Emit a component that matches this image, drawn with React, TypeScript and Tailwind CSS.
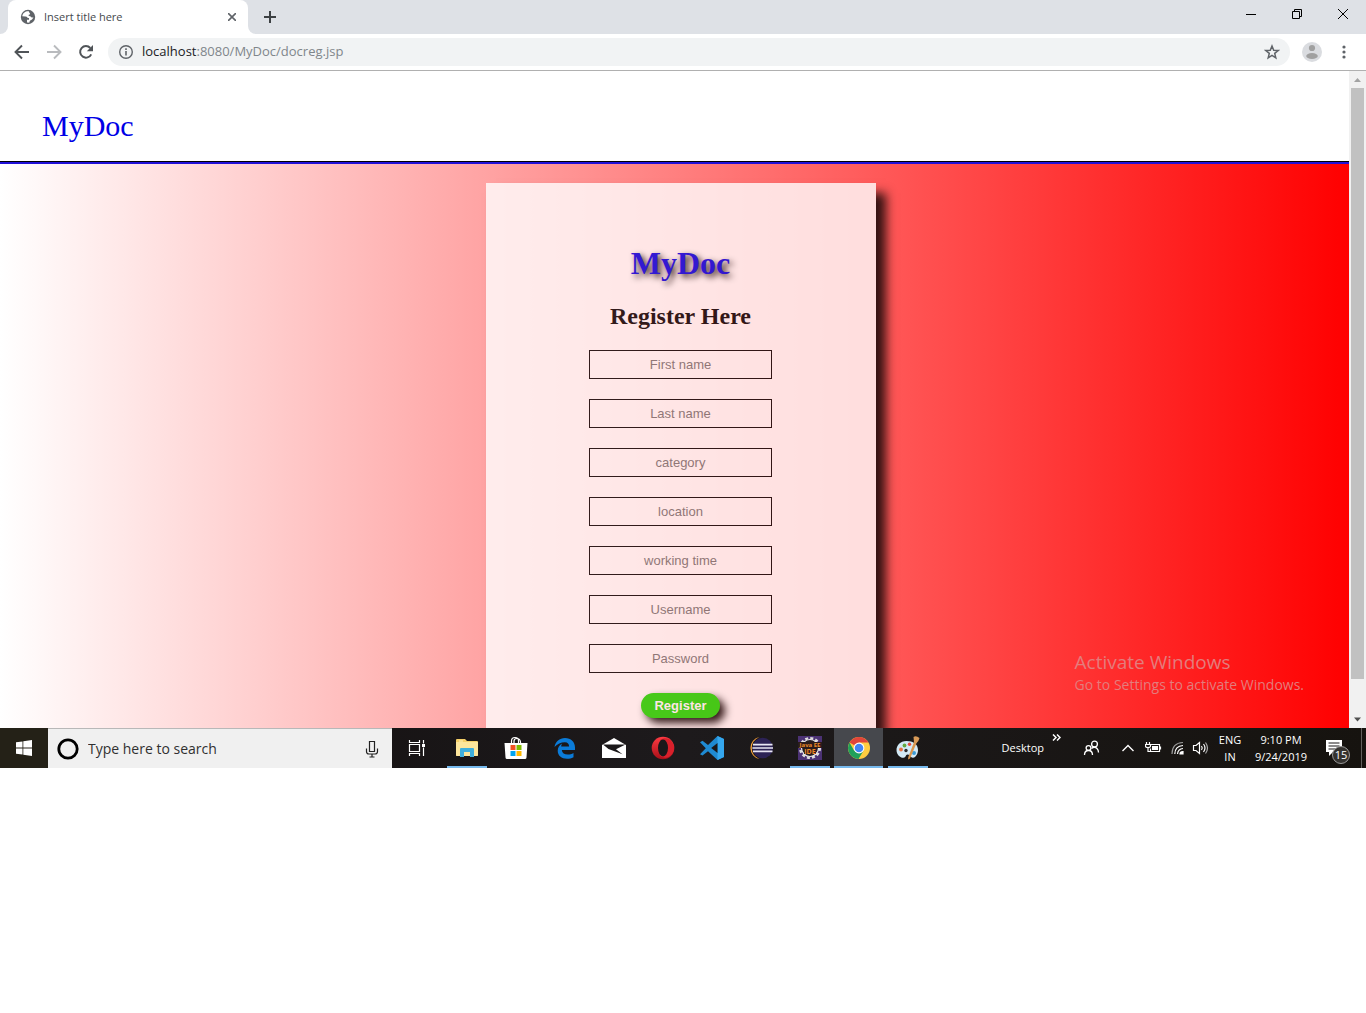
import type { ReactNode } from "react";

const fields = [
  { label: "First name", type: "text" },
  { label: "Last name", type: "text" },
  { label: "category", type: "text" },
  { label: "location", type: "text" },
  { label: "working time", type: "text" },
  { label: "Username", type: "text" },
  { label: "Password", type: "password" },
];

function TitleBar() {
  return (
    <div className="flex h-[34px] items-stretch bg-[#dee1e6]">
      <div className="flex w-2 items-end bg-white">
        <div className="h-full w-full rounded-br-lg bg-[#dee1e6]" />
      </div>
      <div className="flex w-60 items-center rounded-t-lg bg-white pr-2 pl-3">
        <svg width="16" height="16" viewBox="0 0 16 16" aria-hidden="true">
          <circle cx="8" cy="8" r="7.2" fill="#5f6368" />
          <path d="M8.8 2.300C5.500 2 2.600 4.100 2.300 7.300l3.200.1c1.500 0 2.100.8 2 1.700h1.500v1.600H7v2.900c.8.200 1.700.2 2.500 0 0-1.300.400-2 1.500-2.500 1-.5 1.900-1.200 2.400-2.800-1 .4-1.800.3-2.300-.4-.6-.8-1.700-.5-2.300-1.100-.5-.5-.2-1.200.5-1.300.9-.1 1-.8.5-1.300-.6-.5-.9-1.200-1-1.900z" fill="#fff" />
        </svg>
        <span className="ml-2 flex-1 text-[11px] text-[#45494d]">Insert title here</span>
        <button aria-label="Close tab" className="flex h-4 w-4 items-center justify-center">
          <svg width="8" height="8" viewBox="0 0 8 8" stroke="#5f6368" strokeWidth="1.600">
            <path d="M0 0l8 8M8 0L0 8" />
          </svg>
        </button>
      </div>
      <div className="flex w-2 bg-white">
        <div className="h-full w-full rounded-bl-lg bg-[#dee1e6]" />
      </div>
      <button aria-label="New tab" className="flex w-7 items-center justify-center">
        <svg width="12" height="12" viewBox="0 0 12 12" stroke="#3c4043" strokeWidth="2">
          <path d="M6 0v12M0 6h12" />
        </svg>
      </button>
      <div className="ml-auto flex h-7">
        <button aria-label="Minimize" className="flex w-[46px] items-center justify-center">
          <svg width="10" height="10" viewBox="0 0 10 10"><path d="M0 5.500h10" stroke="#000" /></svg>
        </button>
        <button aria-label="Restore" className="flex w-[46px] items-center justify-center">
          <svg width="10" height="10" viewBox="0 0 10 10" fill="none" stroke="#000">
            <path d="M.5 2.500h7v7h-7zM2.500 2.500v-2h7v7h-2" />
          </svg>
        </button>
        <button aria-label="Close" className="flex w-[46px] items-center justify-center">
          <svg width="10" height="10" viewBox="0 0 10 10" stroke="#000"><path d="M0 0l10 10M10 0L0 10" /></svg>
        </button>
      </div>
    </div>
  );
}

function Toolbar() {
  return (
    <div className="flex h-[37px] items-center border-b border-[#b0b0b0] bg-white pr-2.5 pl-3">
      <button aria-label="Back" className="w-8">
        <svg width="20" height="20" viewBox="0 0 20 20" fill="none" stroke="#505458" strokeWidth="1.900">
          <path d="M17 10H4M10 3.500L3.500 10l6.500 6.500" />
        </svg>
      </button>
      <button aria-label="Forward" className="w-8">
        <svg width="20" height="20" viewBox="0 0 20 20" fill="none" stroke="#b9bbbe" strokeWidth="1.900">
          <path d="M3 10h13M10 3.500l6.500 6.500-6.500 6.500" />
        </svg>
      </button>
      <button aria-label="Reload" className="w-8">
        <svg width="20" height="20" viewBox="0 0 20 20">
          <path d="M15.200 12.300A5.800 5.800 0 1 1 14.300 6" fill="none" stroke="#505458" strokeWidth="2" />
          <path d="M17 3v6.200h-6.200z" fill="#505458" />
        </svg>
      </button>
      <div className="flex h-7 flex-1 items-center rounded-full bg-[#f1f3f4] px-2.5">
        <svg width="16" height="16" viewBox="0 0 16 16" aria-hidden="true">
          <circle cx="8" cy="8" r="6.300" fill="none" stroke="#5f6368" strokeWidth="1.400" />
          <path d="M8 7v4.500M8 4.300v1.600" stroke="#5f6368" strokeWidth="1.600" />
        </svg>
        <a href="#docreg" className="ml-2 flex-1 text-[13px] text-[#80868b]">
          <span className="text-[#202124]">localhost</span>:8080/MyDoc/docreg.jsp
        </a>
        <button aria-label="Bookmark this page">
          <svg width="16" height="16" viewBox="0 0 16 16" fill="none" stroke="#5f6368" strokeWidth="1.500">
            <path d="M8 2l1.700 4.200 4.500.3-3.500 2.900 1.100 4.400L8 11.400l-3.800 2.400 1.100-4.400-3.500-2.900 4.500-.3z" />
          </svg>
        </button>
      </div>
      <button aria-label="Profile" className="ml-3">
        <svg width="20" height="20" viewBox="0 0 20 20">
          <circle cx="10" cy="10" r="10" fill="#dadce0" />
          <circle cx="10" cy="6" r="3.100" fill="#a0a0a0" />
          <ellipse cx="10" cy="14" rx="5.800" ry="3" fill="#a0a0a0" />
        </svg>
      </button>
      <button aria-label="Menu" className="ml-2.5">
        <svg width="24" height="16" viewBox="0 0 24 16" fill="#5f6368">
          <circle cx="12" cy="3" r="1.600" /><circle cx="12" cy="8" r="1.600" /><circle cx="12" cy="13" r="1.600" />
        </svg>
      </button>
    </div>
  );
}

function RegisterPage() {
  return (
    <div className="min-w-0 flex-1">
      <header className="border-b-2 border-[#2010d8] bg-white">
        <div className="border-b border-black px-[42px] pt-9 pb-[17px] font-['Liberation_Serif',serif] text-3xl leading-[37px]">
          <a href="#home" className="text-[#0000e6]">MyDoc</a>
        </div>
      </header>
      <main className="overflow-hidden bg-linear-to-r/srgb from-white to-[#ff0000] pt-[19px]">
        <form className="relative left-[6px] mx-auto flex w-[390px] flex-col items-center bg-white pt-[62px] pb-2.5 font-['Liberation_Serif',serif] opacity-80 shadow-[10px_10px_10px_#000]">
          <h1 className="text-[32px] leading-9 font-bold text-[#0000e6] [text-shadow:3px_3px_6px_#000]">MyDoc</h1>
          <h2 className="mt-5 mb-[19px] text-2xl leading-[30px] font-bold text-black">Register Here</h2>
          <div className="flex flex-col gap-5">
            {fields.map((f) => (
              <input
                key={f.label}
                type={f.type}
                aria-label={f.label}
                placeholder={f.label}
                className="h-[29px] w-[183px] border border-black bg-transparent text-center font-['Liberation_Sans',sans-serif] text-[13px] text-black placeholder:text-[#757575]"
              />
            ))}
          </div>
          <button
            type="submit"
            className="mt-5 h-[25px] w-[79px] rounded-full bg-[#1adb00] font-['Liberation_Sans',sans-serif] text-[13px] font-bold text-white shadow-[5px_5px_8px_#000]"
          >
            Register
          </button>
        </form>
      </main>
    </div>
  );
}

function ScrollBar() {
  return (
    <div className="flex w-[17px] flex-col items-center bg-[#f1f1f1]" aria-hidden="true">
      <svg width="17" height="17" viewBox="0 0 17 17"><path d="M5 11l3.500-4 3.500 4z" fill="#a3a3a3" /></svg>
      <div className="w-[13px] flex-1 bg-[#c1c1c1]" />
      <div className="h-8" />
      <svg width="17" height="17" viewBox="0 0 17 17"><path d="M5 6.500l3.500 4 3.500-4z" fill="#505050" /></svg>
    </div>
  );
}

function TaskButton({ label, running, active, children }: { label: string; running?: boolean; active?: boolean; children: ReactNode }) {
  return (
    <button
      aria-label={label}
      className={
        "flex h-10 w-[49px] shrink-0 flex-col items-center " + (active ? "bg-[#46484d]" : "")
      }
    >
      <span className="flex h-[38px] items-center pt-0.5">{children}</span>
      {running && <span className={active ? "h-0.5 w-full bg-[#76b9ed]" : "h-0.5 w-10 bg-[#76b9ed]"} />}
    </button>
  );
}

function TaskBar() {
  return (
    <footer className="flex h-10 items-stretch bg-linear-to-r from-[#110d0d] via-[#1d1a1c] to-[#16130f] text-white">
      <button aria-label="Start" className="flex w-12 items-center justify-center bg-[#242117]">
        <svg width="16" height="16" viewBox="0 0 16 16" fill="#fff">
          <path d="M0 2.300L6.500 1.400V7.600H0zM7.300 1.300L16 0v7.600H7.300zM0 8.400h6.500v6.200L0 13.700zM7.300 8.400H16V16l-8.700-1.300z" />
        </svg>
      </button>
      <label className="flex w-[344px] items-center border-t border-[#b8b8b8] bg-[#f0f0f0] pr-3 pl-2">
        <svg width="24" height="24" viewBox="0 0 24 24" aria-hidden="true">
          <circle cx="12" cy="12" r="9.200" fill="none" stroke="#000" strokeWidth="2.800" />
        </svg>
        <input
          aria-label="Search"
          placeholder="Type here to search"
          className="ml-2 min-w-0 flex-1 bg-transparent text-sm text-black placeholder:text-[#303030]"
        />
        <svg width="16" height="18" viewBox="0 0 16 18" fill="none" stroke="#222" strokeWidth="1.200">
          <path d="M5.500 1.500h5v10h-5zM2.500 8.500v3q0 2.500 2.500 2.500h6q2.500 0 2.500-2.500v-3M8 14v3M5.500 17h5" />
        </svg>
      </label>
      <div className="flex w-[50px] justify-center">
        <TaskButton label="Task view">
          <svg width="18" height="18" viewBox="0 0 18 18" fill="none" stroke="#fff" strokeWidth="1.200">
            <path d="M1.500 1v2.500h10V1M1.500 17v-2.500h10V17M1.500 5.500h10v7h-10zM15.500 1v3.500M15.500 8.500V17" />
            <path d="M14 5h3v3h-3z" fill="#fff" stroke="none" />
          </svg>
        </TaskButton>
      </div>
      <TaskButton label="File Explorer" running>
        <svg width="22" height="20" viewBox="0 0 22 20">
          <path d="M0 2q0-1 1-1h8l2 2h10q1 0 1 1v13q0 1-1 1H1q-1 0-1-1z" fill="#f5cf68" />
          <path d="M0 4h22v13q0 1-1 1H1q-1 0-1-1z" fill="#fde69c" />
          <path d="M4 11q0-1 1-1h12q1 0 1 1v8h-4v-5H8v5H4z" fill="#40afdc" />
          <path d="M3 3h4" stroke="#fff1b8" />
        </svg>
      </TaskButton>
      <TaskButton label="Microsoft Store">
        <svg width="24" height="24" viewBox="0 0 24 24">
          <path d="M7.500 7V5q0-3.500 3.500-3.500t3.500 3.500v2M10 7V5q0-2.500 3-2.500t3.500 3.500v1" fill="none" stroke="#fff" strokeWidth="1.200" />
          <path d="M.5 7h23l-1 14.500q-.1 1.500-1.500 1.500H3q-1.400 0-1.500-1.500z" fill="#fff" />
          <path d="M6.500 9h5v5h-5z" fill="#f25022" /><path d="M12.500 9h5v5h-5z" fill="#7fba00" />
          <path d="M6.500 15h5v5h-5z" fill="#00a4ef" /><path d="M12.500 15h5v5h-5z" fill="#ffb900" />
        </svg>
      </TaskButton>
      <TaskButton label="Edge">
        <svg width="22" height="22" viewBox="0 0 22 22">
          <path d="M.5 10C1.500 4.500 5.500 1 11 1c6 0 10 4 10 9.500V13H7.800c.3 3 2.600 4.500 6 4.500 2 0 4-.5 5.700-1.500v4.300c-2 1-4 1.500-6.500 1.500-5.500 0-9.300-3.200-9.300-8 0-3.200 1.700-5.800 4.500-7.300-.7 1-.9 1.800-1 3h7.900c0-2.700-1.400-4.300-4.200-4.300-4 0-7.500 2-10.400 4.800z" fill="#0b7bd8" />
        </svg>
      </TaskButton>
      <TaskButton label="Mail">
        <svg width="24" height="20" viewBox="0 0 24 20">
          <path d="M0 7L12 0l12 7v13H0z" fill="#fff" />
          <path d="M1 6.500h22.500l-9.500 4.800 6.500 5L6.500 11z" fill="#1b181a" />
        </svg>
      </TaskButton>
      <TaskButton label="Opera">
        <svg width="24" height="24" viewBox="0 0 24 24">
          <defs><linearGradient id="opera" x2="0" y2="1"><stop stopColor="#ff3b43" /><stop offset="1" stopColor="#a80f18" /></linearGradient></defs>
          <circle cx="12" cy="12" r="11.300" fill="url(#opera)" />
          <path d="M9 4c8-5 14 2 14 8s-6 13-14 8z" fill="#d9202b" />
          <ellipse cx="12" cy="12" rx="5" ry="8.500" fill="#1b181a" />
        </svg>
      </TaskButton>
      <TaskButton label="Visual Studio Code">
        <svg width="24" height="24" viewBox="0 0 24 24">
          <path d="M17.500 0L24 3v18l-6.500 3L8 15.200 2.500 19.500 0 18.200l5.800-6L0 6.200l2.500-1.500L8 9z" fill="#1f8ad2" />
          <path d="M17.500 0L24 3v18l-6.500 3z" fill="#35a7ee" />
          <path d="M17.500 7v10l-6.300-5z" fill="#1b181a" />
        </svg>
      </TaskButton>
      <TaskButton label="Eclipse">
        <svg width="24" height="24" viewBox="0 0 24 24">
          <path d="M10.500 1A11.200 11.200 0 0 0 10.500 23Q2.800 19.500 2.800 12T10.500 1z" fill="#f7a13a" />
          <circle cx="13.700" cy="12" r="10.300" fill="#2c2255" />
          <path d="M4 8.700h19.500M3.400 12h20.600M4 15.300h19.500" stroke="#e8e6f4" strokeWidth="1.700" />
        </svg>
      </TaskButton>
      <TaskButton label="Java EE IDE" running>
        <svg width="24" height="24" viewBox="0 0 24 24">
          <path d="M0 0h24v24H0z" fill="#4b3274" />
          <circle cx="12" cy="12" r="9.800" fill="none" stroke="#ddd" strokeWidth="2.500" strokeDasharray="3 2.130" />
          <circle cx="12" cy="12" r="8.500" fill="#241c22" stroke="#eee" strokeWidth="1.200" />
          <path d="M0 6h24v6H0zM6 12h12v6H6z" fill="#2b1b1b" />
          <text x="12" y="11" textAnchor="middle" fontSize="6" fontWeight="700" fill="#ef8a28">Java EE</text>
          <text x="12" y="18" textAnchor="middle" fontSize="7" fontWeight="700" fill="#ef8a28">IDE</text>
        </svg>
      </TaskButton>
      <TaskButton label="Chrome" running active>
        <svg width="24" height="24" viewBox="0 0 24 24">
          <circle cx="12" cy="12" r="11" fill="#ffcd40" />
          <path d="M12 12L2.500 6.500A11 11 0 0 1 21.500 6.500H12z" fill="#e0453a" />
          <path d="M2.500 6.500A11 11 0 0 0 11.500 23l5-8.200L12 12 7.200 14.700z" fill="#20a05a" />
          <circle cx="12" cy="12" r="5.400" fill="#fff" />
          <circle cx="12" cy="12" r="4.300" fill="#4285f4" />
        </svg>
      </TaskButton>
      <TaskButton label="Paint" running>
        <svg width="24" height="24" viewBox="0 0 24 24">
          <path d="M10.500 5C4 5 .5 9.500.5 14c0 5 4 8 7 7.800 2.500-.3 2-3 4-3.300 3-.2 3 3.500 5.500 3.200 3-.3 5-4 5-7.700C22 8 17 5 10.500 5z" fill="#d3e9f5" />
          <circle cx="5" cy="13.500" r="1.900" fill="#e87040" /><circle cx="8.500" cy="9.500" r="1.900" fill="#63a83e" />
          <circle cx="13.500" cy="8.300" r="1.700" fill="#e54b3d" /><circle cx="10" cy="14.500" r="1.700" fill="#2e2c2d" />
          <circle cx="18" cy="17" r="2" fill="#3a9bd5" />
          <path d="M18.500 5l2.500 1-7 16.500-2 1 .3-2.500z" fill="#d9964e" />
          <path d="M17.500 1q2.500-2 6 1-.8 3.500-3 5l-2.500-1z" fill="#d99a57" />
        </svg>
      </TaskButton>

      <div className="ml-auto flex items-center text-[11px]">
        <span>Desktop</span>
        <button aria-label="More toolbars" className="ml-2 self-start pt-1.5">
          <svg width="9" height="7" viewBox="0 0 9 7" fill="none" stroke="#fff" strokeWidth="1.500">
            <path d="M1 .5l3 3-3 3M5 .5l3 3-3 3" />
          </svg>
        </button>
        <button aria-label="People" className="ml-[22px]">
          <svg width="18" height="18" viewBox="0 0 18 18" fill="none" stroke="#fff" strokeWidth="1.300">
            <circle cx="11.500" cy="5" r="2.900" /><circle cx="5.500" cy="9" r="2.400" />
            <path d="M1.500 16q0-4.500 4-4.500t4 4.500M8.500 9.500q3-2.500 5.500 0 1.500 1.500 1.500 4" />
          </svg>
        </button>
        <button aria-label="Hidden icons" className="ml-5">
          <svg width="14" height="10" viewBox="0 0 14 10" fill="none" stroke="#fff" strokeWidth="1.400"><path d="M1.500 8L7 2.500 12.500 8" /></svg>
        </button>
        <button aria-label="Battery" className="ml-2.5">
          <svg width="17" height="14" viewBox="0 0 17 14" fill="none" stroke="#fff" strokeWidth="1.200">
            <path d="M6 3.500h8.500v7h-9v-3M15.500 5.500v3M1.500 1v2M4.500 1v2M.5 3.500h5v1.500q0 1.500-2.500 1.500T.5 5zM3 6.500v4h2" />
            <path d="M7 5h6v4H7z" fill="#fff" stroke="none" />
          </svg>
        </button>
        <button aria-label="Wi-Fi" className="ml-2">
          <svg width="16" height="16" viewBox="0 0 16 16" fill="none" stroke="#fff" strokeWidth="1.200">
            <path d="M2 14Q2 3 13 2.500" stroke="#999" /><path d="M4.800 14Q5 6 13 5.500M7.500 14Q8 9 13 8.500" />
            <path d="M10 14q0-2.500 3-2.500V14z" fill="#fff" />
          </svg>
        </button>
        <button aria-label="Volume" className="ml-1.5">
          <svg width="18" height="16" viewBox="0 0 18 16" fill="none" stroke="#fff" strokeWidth="1.200">
            <path d="M1.500 5.500h2.500L7.500 2.500v11L4 10.500H1.500zM9.500 6q1.500 2 0 4M11.500 4q3 4 0 8" /><path d="M13.500 2.500q4 5.500 0 11" stroke="#aaa" />
          </svg>
        </button>
        <div className="ml-1.5 w-7 text-center leading-[17px]">ENG<br />IN</div>
        <div className="ml-2 w-[58px] text-center leading-[17px] whitespace-nowrap">9:10 PM<br />9/24/2019</div>
        <button aria-label="15 notifications" className="relative ml-3.5 h-10 w-[27px]">
          <svg width="17" height="16" viewBox="0 0 17 16" className="absolute top-3 left-0.5">
            <path d="M0 0h16v12H7l-4 4v-4H0z" fill="#fff" />
            <path d="M2.500 3h11M2.500 6h11M2.500 9h7" stroke="#1b181a" strokeWidth="1.200" />
          </svg>
          <span className="absolute top-[18px] left-2 flex h-[18px] w-[18px] items-center justify-center rounded-full border border-[#999] bg-[#34322f] text-[11px]">15</span>
        </button>
        <div className="ml-2.5 h-10 w-[5px] border-l border-[#62605d]" />
      </div>
    </footer>
  );
}

export default function App() {
  return (
    <div className="min-h-screen bg-white font-['Open_Sans','Noto_Sans',sans-serif]">
      <TitleBar />
      <Toolbar />
      <div className="relative flex">
        <RegisterPage />
        <ScrollBar />
        <div className="pointer-events-none absolute right-[62px] bottom-8 text-[#e47c7c]">
          <p className="text-[19px] leading-6">Activate Windows</p>
          <p className="text-sm leading-[22px]">Go to Settings to activate Windows.</p>
        </div>
      </div>
      <TaskBar />
    </div>
  );
}
